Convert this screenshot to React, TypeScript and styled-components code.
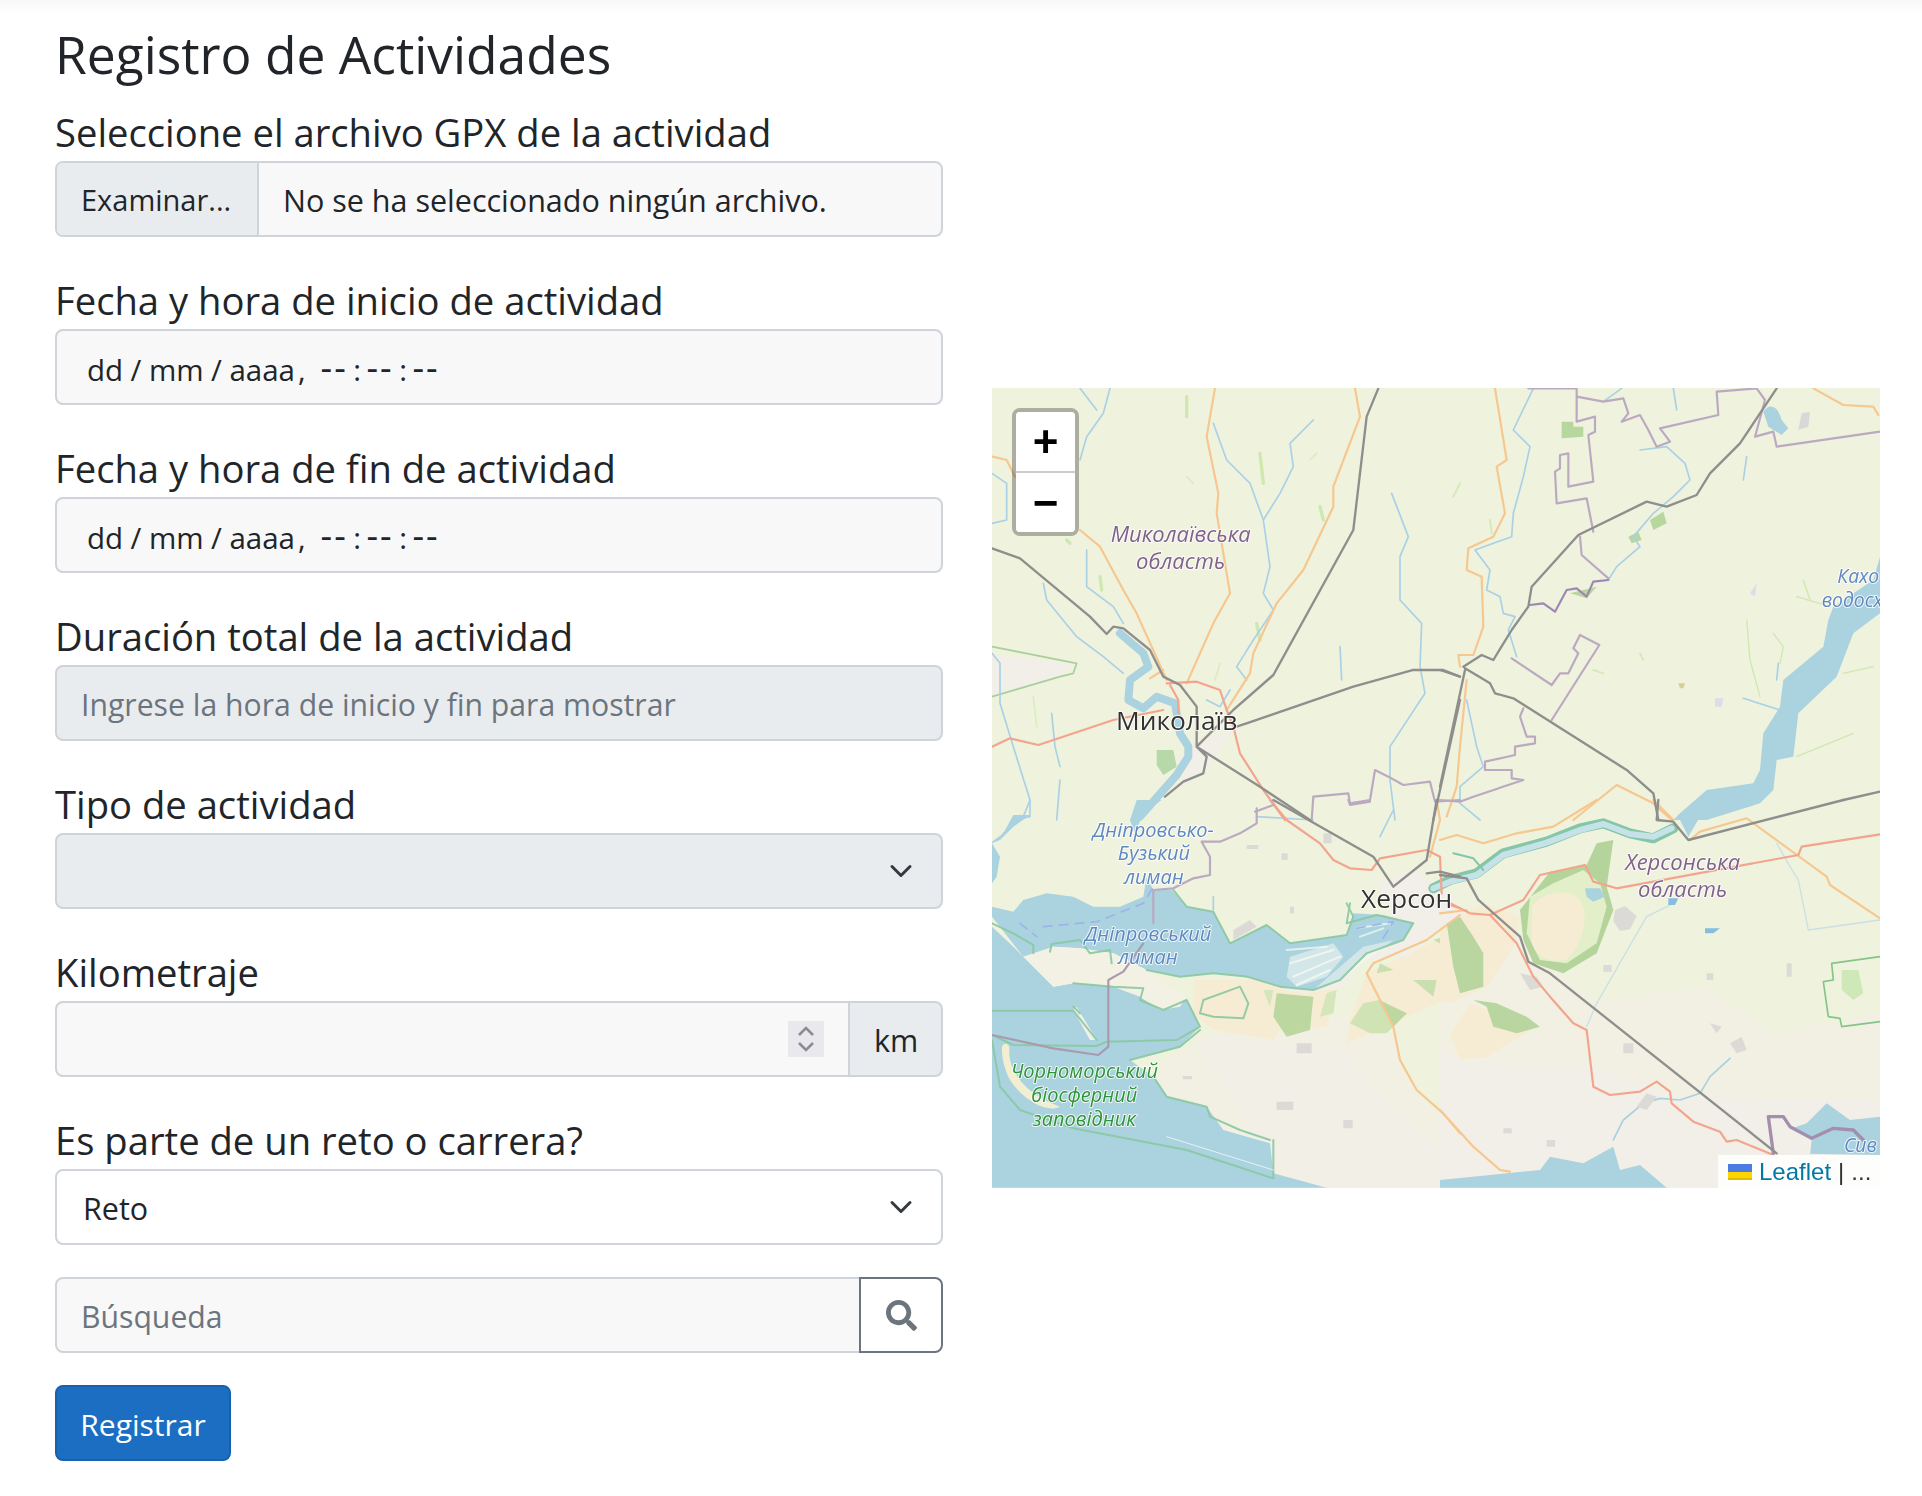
import React from "react";
import styled, { createGlobalStyle } from "styled-components";
import { FaSearch } from "react-icons/fa";

const GlobalStyle = createGlobalStyle`
  html, body {
    margin: 0;
    padding: 0;
    background: #fff;
    color: #212529;
    font-family: "Open Sans", "Noto Sans", sans-serif;
  }
  * { box-sizing: border-box; }
`;

const fields = {
  start: "Fecha y hora de inicio de actividad",
  end: "Fecha y hora de fin de actividad",
};

const App = () => (
  <Page>
    <GlobalStyle />
    <Form>
      <Title>Registro de Actividades</Title>
      <Group>
        <Label>Seleccione el archivo GPX de la actividad</Label>
        <Control>
          <FileButton>Examinar...</FileButton>
          <FileName>No se ha seleccionado ningún archivo.</FileName>
        </Control>
      </Group>
      <Group>
        <Label>{fields.start}</Label>
        <DateBox />
      </Group>
      <Group>
        <Label>{fields.end}</Label>
        <DateBox />
      </Group>
      <Group>
        <Label>Duración total de la actividad</Label>
        <TextInput disabled placeholder="Ingrese la hora de inicio y fin para mostrar" />
      </Group>
      <Group>
        <Label>Tipo de actividad</Label>
        <SelectBox disabled>
          <option></option>
        </SelectBox>
      </Group>
      <Group>
        <Label>Kilometraje</Label>
        <Joined>
          <NumberBox>
            <Spinner>
              <svg width="36" height="36" viewBox="0 0 36 36" fill="none" stroke="#8b8b92" strokeWidth="2.6">
                <path d="M11 14l7-7 7 7M11 22l7 7 7-7" />
              </svg>
            </Spinner>
          </NumberBox>
          <Addon>km</Addon>
        </Joined>
      </Group>
      <Group>
        <Label>Es parte de un reto o carrera?</Label>
        <SelectBox $active defaultValue="Reto">
          <option>Reto</option>
          <option>Carrera</option>
        </SelectBox>
      </Group>
      <Group>
        <Joined>
          <SearchInput placeholder="Búsqueda" />
          <SearchButton type="button">
            <FaSearch size={31} color="#6c757d" />
          </SearchButton>
        </Joined>
      </Group>
      <Submit type="button">Registrar</Submit>
    </Form>
    <MapColumn>
      <MapBox>
        <MapArt />
        <ZoomControl>
          <ZoomButton>+</ZoomButton>
          <ZoomButton>−</ZoomButton>
        </ZoomControl>
        <Attribution>
          <svg width="24" height="16" viewBox="0 0 12 8">
            <path fill="#4C7BE1" d="M0 0h12v4H0z" />
            <path fill="#FFD500" d="M0 4h12v3H0z" />
            <path fill="#E0BC00" d="M0 7h12v1H0z" />
          </svg>
          <AttrLink>Leaflet</AttrLink>
          <span>|</span>
          <span>...</span>
        </Attribution>
      </MapBox>
    </MapColumn>
  </Page>
);

export default App;

// the four panels of the map, each drawn in its own 3x coordinates
const panels = {
  a: "translate(-12 -8) scale(0.33333)",
  b: "translate(448 -8) scale(0.33333)",
  c: "translate(-12 412) scale(0.33333)",
  d: "translate(448 412) scale(0.33333)",
};

const MapArt = () => (
  <MapSvg viewBox="0 0 888 800">
    <defs>
      <filter id="tile" x="0" y="0" width="100%" height="100%">
        <feGaussianBlur stdDeviation="0.7" />
      </filter>
    </defs>
    <g filter="url(#tile)" strokeLinejoin="round" strokeLinecap="round" fill="none">
      <rect width="888" height="800" fill="#eff2dd" />

      {/* lower land is greyer */}
      <g transform={panels.c}>
        <path fill="#f1f0e3" d="M520 800V1163H1440V1000L1300 870 1240 700 1100 640 900 700 700 700Z" />
        <path fill="#f2efe8" d="M640 700L1000 740 1100 760 1220 900 1440 1100V1163H1000L880 1100 760 900Z" opacity=".6" />
      </g>
      <g transform={panels.d}>
        <path fill="#f1f0e3" d="M0 300L240 420 460 600 800 560 1000 700 1320 640V1163H0Z" />
        <path fill="#f2efe8" d="M0 760L200 800 440 800 700 880 1000 900 1320 900V1163H0Z" />
        <path fill="#eff2dd" d="M520 420L800 360 1100 400 1320 360V640L1060 600 800 560 640 560Z" opacity=".8" />
      </g>

      {/* panel C: liman, bay, sand and forest */}
      <g transform={panels.c}>
        <path fill="#f6ecd3" d="M640 540L820 540 1070 570 1040 680 900 690 880 720 700 690 640 640Z" />
        <path fill="#f6ecd3" d="M1160 520L1440 390V580L1260 660 1100 730 1110 660Z" />
        <path fill="#bcd8a0" d="M890 580L1000 590 990 690 920 710 880 650Z" />
        <path fill="#cfe3b4" d="M1110 670L1150 610 1200 600 1280 640 1220 700 1170 700Z" />
        <path fill="#bcd8a0" d="M1195 600L1280 640 1240 680Z" />
        <path fill="#c9dfae" d="M1300 540L1370 540 1360 590ZM1410 515L1440 500V560L1420 550ZM1200 490L1240 510 1190 520ZM1360 420L1420 400 1400 440Z" />
        <path fill="#d5e6bb" d="M850 570L880 570 870 620ZM1040 580L1070 570 1060 640 1020 650Z" />
        <path fill="#f2efe8" d="M1190 250L1300 210 1430 300 1440 340 1280 470 1150 480 1090 560 980 580 900 570 1000 530 1150 440 1240 360Z" />
        <path fill="#aad3df" d="M36 320L100 335 130 300 200 280 280 290 340 320 420 320 490 290 500 230 520 270 575 270 620 320 700 335 750 430 860 375 930 430 1100 405 1120 340 1210 345 1300 370 1270 420 1160 460 1080 540 1000 570 900 560 800 530 700 520 600 530 500 510 400 460 300 445 220 440 130 470 36 350Z" />
        <path fill="#aad3df" d="M465 100L490 40 545 0 470 0 450 60Z" />
        <path fill="#aad3df" d="M36 380L100 440 220 560 280 550 400 560 620 600 660 680 600 740 450 780 520 830 560 890 680 920 730 990 870 1030 880 1120 1040 1163H36Z" />
        <path fill="#aad3df" d="M36 130L60 120 100 80 150 45 100 45 70 100 36 125ZM36 130L60 170 50 230 36 250Z" />
        <path fill="#f3f1e4" d="M130 470L220 440 300 445 400 460 500 510 620 590 600 620 540 630 480 590 400 560 280 550 220 560Z" />
        <path fill="#f2efe8" d="M290 620L350 720 330 720 280 630Z" />
        <path fill="#f3eed0" d="M66 740C72 725 90 730 88 750 85 810 130 880 240 920 200 940 130 900 90 840 74 810 64 770 66 740Z" />
        <path fill="#fbfaf0" d="M1000 570L1150 440 1240 420 1160 480 1080 540Z" opacity=".5" />
        <path fill="#f6f7ee" d="M920 530L930 470 1060 430 1090 470 1040 530 950 560Z" opacity=".55" />
        <path stroke="#fdfdf6" strokeWidth="6" opacity=".65" d="M920 450L1040 440M930 490L1060 450M940 530L1080 470M950 555L1050 510M1130 385L1230 370M1140 410L1210 385" />
        <g stroke="#8ac8a2" strokeWidth="6" opacity=".9">
          <path d="M580 270L620 320 700 335 750 430 860 375 930 430 1100 405 1120 350 1100 310" />
          <path d="M36 370L100 400 160 435 160 460M210 455L215 432 300 420 330 460 390 450 395 490M1160 460L1080 540 1000 570 900 560 800 530 700 520 600 530 500 510" />
          <path d="M280 550L400 560 490 565 480 600 550 630 620 600 660 680 590 720 380 725 350 738 100 735 36 705" />
          <path d="M36 632H280L350 720M280 620L300 640" />
          <path d="M36 720L60 860 120 930 280 985 620 1050 880 1135V1020" />
          <path d="M660 690L600 740 450 780M670 600L780 560 805 610 790 655 700 650 660 640 670 600Z" />
          <path d="M1110 310L1100 370 1190 345 1300 370 1270 420 1160 460" />
          <path d="M520 830L560 890 680 920 690 950 780 990 870 1020" />
        </g>
        <path stroke="#fff" strokeWidth="3" d="M560 1010L880 1110" opacity=".7" />
        <path stroke="#9fb3ea" strokeWidth="5" strokeDasharray="26 22" d="M120 370L170 410M190 380L350 365 490 310 520 260M1130 385L1240 365 1200 430" />
        <g fill="#dcdad6">
          <path d="M950 730h45v30h-45zM890 905h50v25h-50zM1090 960h28v25h-28zM760 390l50-30 20 20-70 40zM1030 100h25v30h-25zM800 135h35v12h-35zM905 160h18v20h-18zM608 828h28v10h-28zM930 320h12v20h-12z" />
        </g>
      </g>

      {/* panel D: Dnipro, sand ring, sea */}
      <g transform={panels.d}>
        <path fill="#b4d49c" d="M240 330L330 215 440 195 470 130 520 120 500 260 520 330 470 460 370 520 280 490 250 420Z" />
        <path fill="#e2efc8" d="M270 290L340 250 430 210 480 250 500 320 470 430 380 490 300 480 260 400Z" />
        <path fill="#f6ecd3" d="M275 320C300 280 370 265 410 290 450 320 440 420 380 480 330 490 280 470 275 420Z" />
        <path fill="#aad3df" d="M435 265L480 265 495 290 460 305 440 290Z" />
        <path fill="#f6ecd3" d="M0 380L130 310 240 350 220 440 140 560 30 610 0 590Z" />
        <path fill="#b9d6a0" d="M20 370L60 350 100 410 130 460 130 560 60 580 40 500Z" />
        <path fill="#f6ecd3" d="M30 700L90 610 170 640 230 670 290 680 140 770 60 780Z" />
        <path fill="#b9d6a0" d="M100 600L170 610 260 650 300 680 230 700 160 680 140 620Z" />
        <path stroke="#85c6a8" strokeWidth="30" d="M-20 265L30 240 110 220 190 160 320 125 420 85 490 70 570 100 640 115 700 85" />
        <path stroke="#c4e2e8" strokeWidth="18" d="M-20 265L30 245 110 225 190 165 320 128 420 90 490 72 570 102 640 110 695 85" />
        <path stroke="#85c6a8" strokeWidth="6" d="M40 160L100 175 130 210" />
        <path fill="#aad3df" d="M720 60L780 0H960L860 20 780 50 745 110Z" />
        <path fill="#aad3df" d="M0 1163V1140L200 1120 300 1110 330 1070 430 1090 520 1040 540 1110 600 1095 680 1163Z" />
        <path fill="#aad3df" d="M1000 1060L1040 990 1100 970 1160 910 1230 960 1320 950V1065Z" />
        <path fill="#f2efe8" d="M1000 1060L1000 960 1050 980 1115 1020 1110 1065Z" />
        <path stroke="#86c488" strokeWidth="5" d="M1320 470L1175 490 1180 540 1150 545 1165 650 1200 655 1205 680 1320 665" />
        <path fill="#cfe8b8" d="M1205 510h50l15 70-30 20-35-30z" />
        <path stroke="#c9e0e4" strokeWidth="4" d="M1010 130L1050 200 1075 240 1105 390 1320 360M700 310L620 350 470 610 440 680" />
        <path stroke="#a9d0e0" strokeWidth="5" d="M870 775L810 830 780 880 720 900 660 895 610 910 550 960 520 1020" />
        <g fill="#dcdad6">
          <path d="M525 330l30-12 35 30-20 40-30 5-20-30zM810 670l35 10-15 20zM870 730l35-20 15 40-30 10zM550 730h30v30h-30zM620 880l30 10-30 40-30-10zM240 520l50 10 20 30-40 10z" />
          <path d="M490 495h25v20h-25zM800 520h20v20h-20zM1040 490h15v40h-15zM320 1020h25v20h-25zM190 985h25v15h-25z" />
        </g>
        <path fill="#85bee0" d="M795 385h45l-20 15h-25zM685 295h30l-10 20h-20z" />
      </g>

      {/* panel B: reservoir and green patches */}
      <g transform={panels.b}>
        <path fill="#aad3df" d="M1320 530L1300 600 1180 680 1165 720 1150 800 1030 900 1020 980 970 1060 960 1170 940 1210 800 1230 720 1300 700 1320H800L960 1270 1000 1230 1010 1140 1060 1130 1075 1000 1190 890 1240 760 1320 700Z" />
        <path fill="#aad3df" d="M970 95C990 65 1015 80 1025 120L1045 145 1025 165 985 140Z" />
        <path fill="#d8d8d8" d="M1085 100L1110 95 1105 140 1075 150Z" />
        <path fill="#b8d79f" d="M365 125h35v15h30v30l-65 5z" />
        <path fill="#b8d79f" d="M630 420L670 395 680 430 640 450ZM565 470L595 455 605 480 575 490ZM390 640L470 620 440 655Z" />
        <path stroke="#cfe8b0" strokeWidth="4" d="M1000 760L1030 800 1020 850M920 720L930 840 960 950M1070 650L1170 680M1210 880L1300 860M1070 1130L1240 1060M1090 600L1110 660" />
        <path stroke="#d5eab6" strokeWidth="6" d="M60 310L40 350M150 420L155 460M600 820L610 840M460 870L490 880" />
        <path fill="#d5ce9a" d="M715 910h20l-5 15h-10z" />
        <path fill="#dcdcec" d="M825 955h25l-5 25h-20zM930 640l20-30-5 40z" />
      </g>

      {/* panel A: patches */}
      <g transform={panels.a}>
        <path stroke="#cfe8b0" strokeWidth="10" d="M620 50L620 110M840 220L850 310M1020 380L1030 420M360 590L365 630M830 730L840 780M260 480L270 490" />
        <path stroke="#d8eec0" strokeWidth="5" d="M990 240L1010 220M620 290L640 310M720 850L705 900M160 950L170 1040" />
        <path fill="#f2efe8" d="M36 825L290 850 240 890 36 950Z" />
        <path stroke="#a9cf9c" strokeWidth="5" d="M36 800L290 850 280 880 240 890 36 950" />
        <path fill="#f2efe8" d="M640 1090L760 1050 680 1170 610 1220 590 1140Z" />
        <path stroke="#aad3df" strokeWidth="24" d="M420 760L490 820 505 860 450 900 445 960 490 985 530 950 585 970 600 1060 625 1100 625 1130 590 1185 480 1310" />
        <path fill="#b7d8a8" d="M530 1110h50l10 50-40 25-20-30z" />
      </g>

      {/* rivers */}
      <g stroke="#a9d1e6" strokeWidth="5">
        <g transform={panels.a}>
          <path d="M390 25L370 100 320 170 300 240M300 25L350 90M700 130L740 240 810 310 850 420 870 560 850 640 880 690 820 780 770 860 800 900M1000 120L930 190 940 260 900 340 850 420M1235 340L1285 470 1260 530 1260 660 1325 730 1320 860 1335 940 1230 1100 1230 1200 1245 1320M190 610L200 660 290 770 370 830 430 880M36 820L60 850 60 970 100 1100 150 1260 150 1310 100 1320M1080 800L1085 900M215 1000L225 1100 240 1160M36 280L80 310 80 420 36 430M320 510L320 620 400 680 430 730M680 960L720 980 750 930M240 1200L230 1320" />
        </g>
        <g transform={panels.b}>
          <path d="M280 25L220 150 270 200 250 290 220 400 215 470 105 510 150 570 140 630 180 650 190 700 225 710 205 750 230 830M600 210L680 200 735 250 750 300 700 350 640 400 580 470 600 500 530 560 505 600M920 230L910 300M60 1220L60 1270 120 1320M545 25L490 65M80 960L110 1100 130 1160 60 1220M700 25L710 90M1015 850L1010 900M910 955L1020 990" />
        </g>
        <g transform={panels.c}>
          <path d="M830 50L1000 60M1240 30L1200 110M700 290L700 330M150 0L130 50 70 100" />
        </g>
      </g>

      {/* orange roads */}
      <g stroke="#f6c78e" strokeWidth="6.5">
        <g transform={panels.a}>
          <path d="M705 25L680 170 715 340 710 400 750 640 700 730 620 910M38 230L80 240 105 290M300 450L360 500 430 630 470 700 560 900M510 895L550 870M1125 25L1140 110 1060 320 1060 380 970 570 890 670 820 820 810 880 740 990" />
        </g>
        <g transform={panels.b}>
          <path d="M165 25L200 240 170 260 195 400 160 470 85 505 80 570 125 590 130 740 100 825 55 825 60 860M80 900L60 1100 50 1220 20 1310M1120 25L1210 75 1300 80 1315 105M400 1320L530 1215 640 1270 695 1320" />
        </g>
        <g transform={panels.c}>
          <path d="M1440 345L1340 420 1180 490 1160 520 1240 680 1260 780 1310 870 1390 940 1440 1000M1370 0L1380 60 1350 170" />
        </g>
        <g transform={panels.d}>
          <path d="M920 55L780 95 750 120M640 0L700 60M920 55L1160 230 1170 255 1320 355M470 0L340 80 230 100 130 130 50 105 0 120M0 930L100 1040 180 1110 210 1115M0 340L80 330" />
        </g>
      </g>

      {/* red roads */}
      <g stroke="#f3a48d" strokeWidth="6.5">
        <g transform={panels.a}>
          <path d="M36 1100L90 1075 175 1095 400 1020 550 990M560 910L650 905 720 930 740 990 760 1040 780 1120 850 1230 915 1320M570 915L595 960 595 1000" />
        </g>
        <g transform={panels.c}>
          <path d="M870 0L920 60 1020 130 1060 180 1110 205 1175 210 1200 175 1340 150 1380 170 1385 280M1410 315L1440 325" />
        </g>
        <g transform={panels.d}>
          <path d="M30 310L90 340 150 345 250 300 300 225 435 195 460 245 530 265 1075 165 1085 140 1320 103M150 345L230 430 280 530 330 590 400 670 440 690 460 860 510 885 600 875 650 845 690 875 695 910 760 965 840 995 860 1025 890 1020 1000 1065" />
        </g>
      </g>

      {/* purple borders */}
      <g stroke="#bba9c2" strokeWidth="6.5">
        <g transform={panels.a}>
          <path d="M825 1295L880 1275M995 1320L1000 1250 1105 1240 1110 1270 1170 1260 1185 1170 1225 1190 1270 1215 1350 1205 1365 1265 1440 1260" />
        </g>
        <g transform={panels.b}>
          <path d="M265 25H410V125L465 110 465 155 445 165 460 305 385 320 385 220 360 225 360 265 345 275 350 370 440 355 460 455M410 50L490 65 550 55 565 100 545 125 600 105 625 150 650 200 690 185 660 145 835 105 830 35 950 25 975 60 945 170 1000 155 1010 200 1320 155M420 470L425 525 505 595M215 835L335 915 360 880 385 880 415 820 400 805 420 765 478 795 335 1020M250 985L240 1010 260 1070 285 1070 285 1090 225 1100 225 1125 135 1145 135 1170 215 1170 215 1195 250 1200 100 1250 60 1265 0 1260" />
          <path stroke="#9c88b4" d="M505 600L460 605 440 650 410 625 380 630 345 695 310 670 270 675" />
        </g>
        <g transform={panels.c}>
          <path d="M830 25L830 70 780 100 720 125 665 125 690 170 690 225 640 235 580 265 520 270 520 370M1105 0L1110 15 1170 5" />
          <path stroke="#a99bad" d="M490 430L430 515 385 540 385 740 355 765 220 745 36 705" />
        </g>
        <g transform={panels.d}>
          <path stroke="#a38eae" strokeWidth="10" d="M1000 1060L985 950 1030 950 1050 980 1115 1015 1180 985 1240 990 1270 1020" />
        </g>
      </g>

      {/* grey trunk roads */}
      <g stroke="#8e8e8c" strokeWidth="7">
        <g transform={panels.a}>
          <path d="M36 505L120 535 330 710 380 762 400 740 430 745 510 810 550 890 600 915 650 980 650 1100M1195 25L1160 110 1120 450 880 885 760 990 650 1100M770 1040L1120 920 1300 870 1390 870 1440 890M1440 960L1360 1320M650 1100L840 1220 990 1320M555 1250L610 1205 670 1180 680 1130 650 1100" />
        </g>
        <g transform={panels.b}>
          <path d="M0 870L60 890M75 870L0 1220M70 860L125 825 160 840 215 750 265 680 275 620 415 465 620 365 680 380 770 345 810 280 900 190 1010 25M75 865L150 910 165 940 220 955 560 1170 640 1240 655 1320M1210 1260L1320 1235" />
        </g>
        <g transform={panels.c}>
          <path d="M880 0L1180 170 1240 260 1340 180 1370 0M1340 220L1380 215 1440 230" />
        </g>
        <g transform={panels.d}>
          <path d="M655 0L650 60 700 65 745 120 1210 0M0 225L80 235 115 300 240 410 265 485 330 520 1010 1060" />
        </g>
      </g>

      {/* place names */}
      <g fontFamily="'Open Sans', 'Noto Sans', sans-serif" textAnchor="middle" stroke="#fff" strokeOpacity=".8" strokeWidth="6" style={{ paintOrder: "stroke" }}>
        <g transform={panels.a} fill="#80628c" fontStyle="italic" fontSize="66">
          <text x="602" y="486">Миколаївська</text>
          <text x="602" y="566">область</text>
        </g>
        <g transform={panels.a} fill="#333" fontSize="79" fontWeight="500">
          <text x="590" y="1050">Миколаїв</text>
        </g>
        <g transform={panels.c} fill="#333" fontSize="79" fontWeight="500">
          <text x="1280" y="324">Херсон</text>
        </g>
        <g transform={panels.c} fill="#6088c0" fontStyle="italic" fontSize="60">
          <text x="520" y="110">Дніпровсько-</text>
          <text x="522" y="180">Бузький</text>
          <text x="522" y="252">лиман</text>
          <text x="504" y="422">Дніпровський</text>
          <text x="504" y="492">лиман</text>
        </g>
        <g transform={panels.c} fill="#2f9438" fontStyle="italic" fontSize="60">
          <text x="313" y="834">Чорноморський</text>
          <text x="313" y="906">біосферний</text>
          <text x="313" y="978">заповідник</text>
        </g>
        <g transform={panels.d} fill="#80628c" fontStyle="italic" fontSize="66">
          <text x="728" y="210">Херсонська</text>
          <text x="728" y="290">область</text>
        </g>
        <g transform={panels.b} fill="#6088c0" fontStyle="italic" fontSize="58" textAnchor="start">
          <text x="1192" y="610">Кахо</text>
          <text x="1145" y="682">водосх</text>
        </g>
        <g transform={panels.d} fill="#6088c0" fontStyle="italic" fontSize="58" textAnchor="start">
          <text x="1212" y="1055">Сив</text>
        </g>
      </g>
    </g>
  </MapSvg>
);

const DateBox = () => (
  <DateField>
    <span>dd</span>
    <DateSep $gap={7.5}>/</DateSep>
    <span>mm</span>
    <DateSep $gap={7.5}>/</DateSep>
    <span>aaaa</span>
    <DateComma>,</DateComma>
    <Dashes>--</Dashes>
    <DateSep $gap={5.5}>:</DateSep>
    <Dashes>--</Dashes>
    <DateSep $gap={5.5}>:</DateSep>
    <Dashes>--</Dashes>
  </DateField>
);

const Page = styled.div`
  display: grid;
  grid-template-columns: 888px 888px;
  column-gap: 49px;
  align-items: start;
  min-height: 1496px;
  padding: 20px 0 0 55px;
  background: linear-gradient(#f7f7f7, #fff 14px);
`;

const Form = styled.form`
  display: flex;
  flex-direction: column;
`;

const Title = styled.h3`
  margin: 0 0 13px;
  font-size: 51.5px;
  font-weight: 400;
  line-height: 68px;
`;

const Group = styled.div`
  display: flex;
  flex-direction: column;
  margin-bottom: 32px;
`;

const Label = styled.label`
  height: 60px;
  font-size: 38.2px;
  line-height: 62px;
`;

const Control = styled.div`
  display: flex;
  height: 76px;
  overflow: hidden;
  border: 2px solid #ced4da;
  border-radius: 8px;
  background: #f8f8f8;
  font-size: 30.5px;
  line-height: 74px;
`;

const FileButton = styled.div`
  flex: 0 0 202px;
  height: 72px;
  padding-left: 24px;
  border-right: 2px solid #ced4da;
  background: #e9ecef;
  font-size: 29px;
`;

const FileName = styled.div`
  padding-left: 24px;
  height: 72px;
`;

const DateField = styled(Control)`
  align-items: baseline;
  padding-left: 30px;
  line-height: 73px;
  font-size: 29.5px;
`;

const DateSep = styled.span<{ $gap: number }>`
  margin: 0 ${(props) => props.$gap}px;
`;

const DateComma = styled.span`
  margin: 0 15px 0 3px;
`;

const Dashes = styled.span`
  font-size: 36px;
  letter-spacing: 2px;
`;

const TextInput = styled.input`
  width: 100%;
  height: 76px;
  padding: 2px 24px 0;
  border: 2px solid #ced4da;
  border-radius: 8px;
  background: ${(props) => (props.disabled ? "#e9ecef" : "#f8f8f8")};
  color: #212529;
  font-family: inherit;
  font-size: 30.2px;
  outline: none;

  &::placeholder {
    color: #6c757d;
    opacity: 1;
  }
`;

const SelectBox = styled.select<{ $active?: boolean }>`
  width: 100%;
  height: 76px;
  padding: 2px 0 0 26px;
  border: 2px solid #ced4da;
  border-radius: 8px;
  appearance: none;
  opacity: 1;
  color: #212529;
  font-family: inherit;
  font-size: 30.5px;
  outline: none;
  background-color: ${(props) => (props.$active ? "#fff" : "#e9ecef")};
  background-image: url("data:image/svg+xml,%3csvg xmlns='http://www.w3.org/2000/svg' viewBox='0 0 16 16'%3e%3cpath fill='none' stroke='%23343a40' stroke-linecap='round' stroke-linejoin='round' stroke-width='2' d='M2 5l6 6 6-6'/%3e%3c/svg%3e");
  background-repeat: no-repeat;
  background-position: right 24px center;
  background-size: 32px 24px;
`;

const Joined = styled.div`
  display: flex;
  height: 76px;
`;

const NumberBox = styled.div`
  flex: 1;
  display: flex;
  align-items: center;
  justify-content: flex-end;
  padding-right: 24px;
  border: 2px solid #ced4da;
  border-radius: 8px 0 0 8px;
  background: #f8f8f8;
`;

const Spinner = styled.div`
  display: flex;
  width: 36px;
  height: 36px;
  background: #e9e9ed;
`;

const Addon = styled.div`
  flex: 0 0 95px;
  margin-left: -2px;
  padding-left: 24px;
  border: 2px solid #ced4da;
  border-radius: 0 8px 8px 0;
  background: #e9ecef;
  font-size: 30.5px;
  line-height: 74px;
`;

const SearchInput = styled(TextInput)`
  flex: 1;
  width: auto;
  border-radius: 8px 0 0 8px;
`;

const SearchButton = styled.button`
  flex: 0 0 84px;
  display: flex;
  align-items: center;
  justify-content: center;
  margin-left: -2px;
  padding: 0;
  border: 2px solid #6c757d;
  border-radius: 0 8px 8px 0;
  background: #fff;
`;

const Submit = styled.button`
  align-self: flex-start;
  width: 176px;
  height: 76px;
  padding: 2px 0 0;
  border: 2px solid #1861ac;
  border-radius: 8px;
  background: #1b6ec2;
  color: #fff;
  font-family: inherit;
  font-size: 30px;
`;

const MapColumn = styled.div`
  padding-top: 368px;
`;

const MapBox = styled.div`
  position: relative;
  width: 888px;
  height: 800px;
  overflow: hidden;
  background: #eff2dd;
`;

const MapSvg = styled.svg`
  display: block;
  width: 888px;
  height: 800px;
`;

const ZoomControl = styled.div`
  position: absolute;
  top: 20px;
  left: 20px;
  width: 67px;
  height: 128px;
  display: flex;
  flex-direction: column;
  border: 4px solid rgba(0, 0, 0, 0.28);
  border-radius: 8px;
  background-clip: padding-box;
`;

const ZoomButton = styled.div`
  flex: 1;
  display: flex;
  align-items: center;
  justify-content: center;
  background: #fff;
  color: #000;
  font-family: "Liberation Sans", sans-serif;
  font-size: 44px;
  font-weight: 700;
  line-height: 1;

  &:first-child {
    border-bottom: 2px solid #ccc;
    border-radius: 4px 4px 0 0;
  }

  &:last-child {
    border-radius: 0 0 4px 4px;
  }
`;

const Attribution = styled.div`
  position: absolute;
  right: 0;
  bottom: 0;
  display: flex;
  align-items: center;
  gap: 7px;
  width: 162px;
  height: 33px;
  padding-left: 10px;
  background: rgba(255, 255, 255, 0.85);
  color: #333;
  font-family: "Liberation Sans", sans-serif;
  font-size: 24px;
`;

const AttrLink = styled.a`
  color: #0078a8;
`;
